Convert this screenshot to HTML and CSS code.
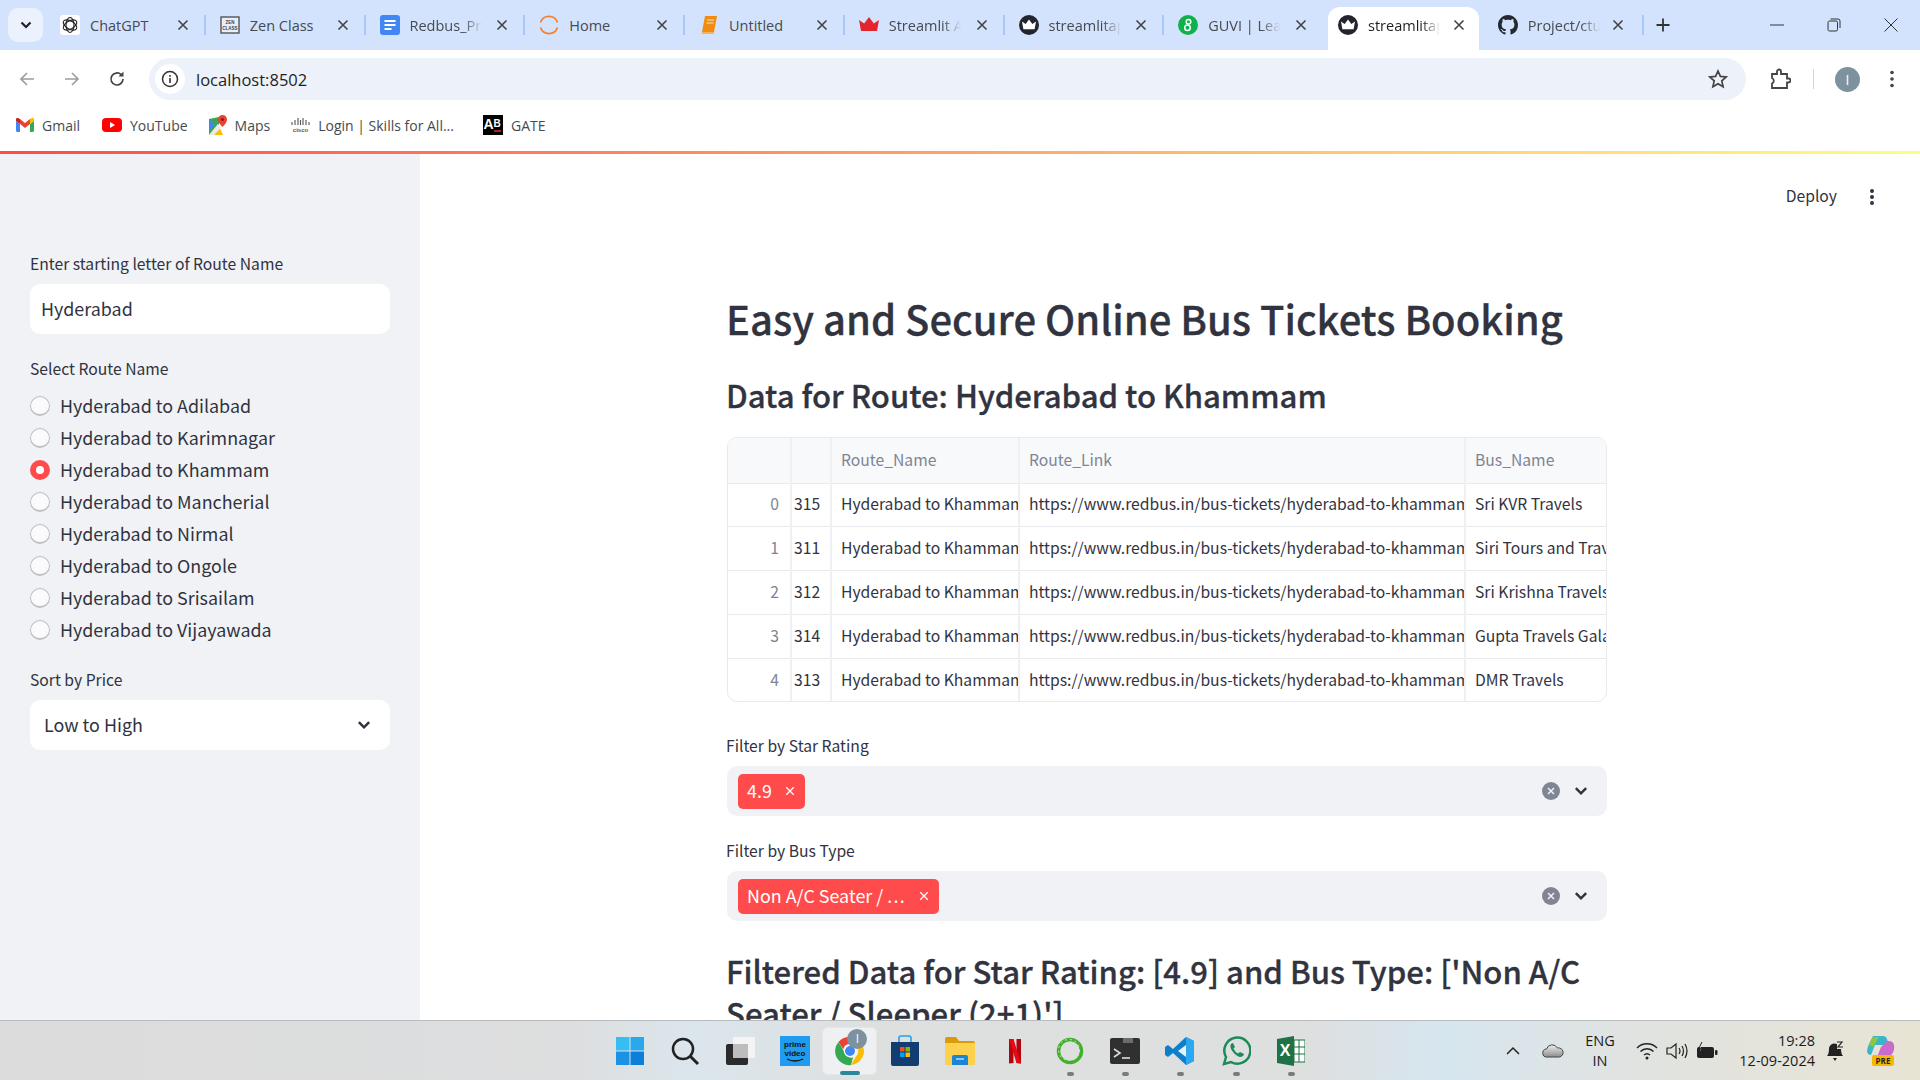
FILE: index.html
```html
<!DOCTYPE html>
<html>

<head>
    <meta name="viewport" content="width=device-width, initial-scale=1">
    <title>streamlitapp</title>
    <link rel="stylesheet" href="styles.css">
</head>

<body>

<svg class="defs" width="0" height="0">
    <symbol id="x" viewBox="0 0 12 12"><path d="M1.500 1.500l9 9M10.500 1.500l-9 9" fill="none" stroke="currentColor" stroke-width="1.600"/></symbol>
    <symbol id="crown" viewBox="0 0 20 20"><path d="M0 5l5.200 3.500L10 2l4.800 6.500L20 5l-2 11H2z" fill="currentColor"/></symbol>
    <symbol id="chev" viewBox="0 0 14 14"><path d="M2.500 4.500L7 9l4.500-4.500" fill="none" stroke="currentColor" stroke-width="2.200"/></symbol>
    <symbol id="clear" viewBox="0 0 18 18"><circle cx="9" cy="9" r="9" fill="#808495"/><path d="M6 6l6 6M12 6l-6 6" stroke="#f0f2f6" stroke-width="1.500"/></symbol>
</svg>

<!-- browser window -->
<header class="browser">
    <div class="tabstrip">
        <div class="tab-search"><svg width="14" height="14"><use href="#chev"/></svg></div>

        <div class="tab">
            <svg class="favicon" viewBox="0 0 20 20"><rect width="20" height="20" rx="3" fill="#fff"/><g fill="none" stroke="#222" stroke-width="1.100"><ellipse cx="10" cy="10" rx="4" ry="7.500"/><ellipse cx="10" cy="10" rx="4" ry="7.500" transform="rotate(60 10 10)"/><ellipse cx="10" cy="10" rx="4" ry="7.500" transform="rotate(120 10 10)"/></g></svg>
            <span class="tab-title">ChatGPT</span>
            <svg class="tab-x" width="12" height="12"><use href="#x"/></svg>
        </div>
        <div class="tab">
            <svg class="favicon" viewBox="0 0 20 20"><rect x="1" y="2" width="18" height="16" fill="#e9eef7" stroke="#555" stroke-width="1.400"/><text x="10" y="9" class="fav-text">ZEN</text><text x="10" y="15" class="fav-text">CLASS</text></svg>
            <span class="tab-title">Zen Class</span>
            <svg class="tab-x" width="12" height="12"><use href="#x"/></svg>
        </div>
        <div class="tab">
            <svg class="favicon" viewBox="0 0 20 20"><rect width="20" height="20" rx="3" fill="#4285f4"/><path d="M4.500 6h11M4.500 10h11M4.500 14h7" stroke="#fff" stroke-width="2"/></svg>
            <span class="tab-title fade">Redbus_Project</span>
            <svg class="tab-x" width="12" height="12"><use href="#x"/></svg>
        </div>
        <div class="tab">
            <svg class="favicon" viewBox="0 0 20 20"><path d="M1.500 7.500a9 9 0 0 1 17 0M1.500 12.500a9 9 0 0 0 17 0" fill="none" stroke="#f4812f" stroke-width="1.800"/></svg>
            <span class="tab-title">Home</span>
            <svg class="tab-x" width="12" height="12"><use href="#x"/></svg>
        </div>
        <div class="tab">
            <svg class="favicon" viewBox="0 0 20 20"><path d="M6 1h12l-3 16H3z" fill="#f08c12"/><path d="M3 17l-.6 2h12.200l.4-2z" fill="#f7b25c"/><path d="M8 5h7M7.500 8h7" stroke="#fde2bd" stroke-width="1.200"/></svg>
            <span class="tab-title">Untitled</span>
            <svg class="tab-x" width="12" height="12"><use href="#x"/></svg>
        </div>
        <div class="tab">
            <svg class="favicon crown-red" width="20" height="20"><use href="#crown"/></svg>
            <span class="tab-title fade">Streamlit App</span>
            <svg class="tab-x" width="12" height="12"><use href="#x"/></svg>
        </div>
        <div class="tab">
            <span class="favicon crown-dark"><svg width="14" height="14"><use href="#crown"/></svg></span>
            <span class="tab-title fade">streamlitapp</span>
            <svg class="tab-x" width="12" height="12"><use href="#x"/></svg>
        </div>
        <div class="tab last-before-active">
            <svg class="favicon" viewBox="0 0 20 20"><circle cx="10" cy="10" r="10" fill="#0fb14b"/><g fill="none" stroke="#fff" stroke-width="1.500"><circle cx="10.500" cy="6.800" r="2.300"/><circle cx="9.500" cy="12.800" r="2.800"/></g></svg>
            <span class="tab-title fade">GUVI | Learn</span>
            <svg class="tab-x" width="12" height="12"><use href="#x"/></svg>
        </div>
        <div class="tab active">
            <span class="favicon crown-dark"><svg width="14" height="14"><use href="#crown"/></svg></span>
            <span class="tab-title fade">streamlitapp</span>
            <svg class="tab-x" width="12" height="12"><use href="#x"/></svg>
        </div>
        <div class="tab">
            <svg class="favicon" viewBox="0 0 16 16"><path fill="#24292f" d="M8 0C3.580 0 0 3.580 0 8c0 3.540 2.290 6.530 5.470 7.590.4.070.55-.17.55-.38 0-.19-.01-.82-.01-1.490-2.010.37-2.530-.49-2.690-.94-.09-.23-.48-.94-.82-1.130-.28-.15-.68-.52-.01-.53.63-.01 1.080.58 1.230.82.72 1.210 1.870.87 2.330.66.070-.52.28-.87.51-1.070-1.780-.2-3.640-.89-3.640-3.950 0-.87.31-1.590.82-2.150-.08-.2-.36-1.020.08-2.120 0 0 .67-.21 2.200.82.64-.18 1.320-.27 2-.27.68 0 1.360.09 2 .27 1.530-1.040 2.200-.82 2.200-.82.44 1.100.16 1.920.08 2.120.51.56.82 1.270.82 2.150 0 3.070-1.870 3.750-3.650 3.950.29.25.54.73.54 1.480 0 1.070-.01 1.930-.01 2.200 0 .21.15.46.55.38A8.013 8.013 0 0016 8c0-4.420-3.580-8-8-8z"/></svg>
            <span class="tab-title fade">Project/ctu</span>
            <svg class="tab-x" width="12" height="12"><use href="#x"/></svg>
        </div>

        <svg class="new-tab" width="16" height="16" viewBox="0 0 16 16"><path d="M8 1.500v13M1.500 8h13" stroke="#333" stroke-width="1.800"/></svg>

        <div class="win-controls">
            <svg width="14" height="14" viewBox="0 0 14 14"><path d="M0 7h14" stroke="#333"/></svg>
            <svg width="14" height="14" viewBox="0 0 14 14"><rect x="1" y="3" width="9.500" height="10" rx="1.500" fill="none" stroke="#333"/><path d="M3.500 1h7.500q2 0 2 2v7" fill="none" stroke="#333"/></svg>
            <svg width="14" height="14" viewBox="0 0 14 14"><path d="M.5.500l13 13M13.500.500l-13 13" stroke="#333"/></svg>
        </div>
    </div>

    <div class="toolbar">
        <svg class="nav-btn" width="18" height="18" viewBox="0 0 18 18"><path d="M16 9H3M9 3L3 9l6 6" fill="none" stroke="#9b9ea3" stroke-width="1.700"/></svg>
        <svg class="nav-btn" width="18" height="18" viewBox="0 0 18 18"><path d="M2 9h13M9 3l6 6-6 6" fill="none" stroke="#9b9ea3" stroke-width="1.700"/></svg>
        <svg class="nav-btn" width="18" height="18" viewBox="0 0 18 18"><path d="M15 9a6 6 0 1 1-1.800-4.300" fill="none" stroke="#444" stroke-width="1.700"/><path d="M15.500 1.500v5h-5z" fill="#444"/></svg>

        <div class="omnibox">
            <span class="site-info">
                <svg width="18" height="18" viewBox="0 0 18 18"><circle cx="9" cy="9" r="7.500" fill="none" stroke="#333" stroke-width="1.500"/><path d="M9 8v5M9 5v1.800" stroke="#333" stroke-width="1.600"/></svg>
            </span>
            <span class="url">localhost:8502</span>
            <svg class="star" width="20" height="20" viewBox="0 0 20 20"><path d="M10 2l2.400 5.400 5.800.6-4.400 3.900 1.300 5.800L10 14.700l-5.100 3 1.300-5.800L1.800 8l5.800-.6z" fill="none" stroke="#444" stroke-width="1.700"/></svg>
        </div>

        <svg class="puzzle" width="22" height="22" viewBox="0 0 22 22"><path d="M3 6h5V3.500a2 2 0 0 1 4 0V6h6v4.500h1.500a2 2 0 0 1 0 4H18V20H3v-4.500a3 3 0 0 0 0-5.500z" fill="none" stroke="#444" stroke-width="1.800"/></svg>
        <span class="toolbar-sep"></span>
        <span class="avatar">I</span>
        <svg class="kebab" width="4" height="18" viewBox="0 0 4 18"><circle cx="2" cy="2.500" r="1.800" fill="#444"/><circle cx="2" cy="9" r="1.800" fill="#444"/><circle cx="2" cy="15.500" r="1.800" fill="#444"/></svg>
    </div>

    <div class="bookmarks">
        <span class="bookmark bm-gmail">
            <svg width="18" height="14" viewBox="0 0 18 14"><path d="M0 3v9.500A1.500 1.500 0 0 0 1.500 14H4V6z" fill="#4285f4"/><path d="M18 3v9.500a1.500 1.500 0 0 1-1.500 1.500H14V6z" fill="#34a853"/><path d="M4 6l5 4 5-4V1L9 5 4 1z" fill="#ea4335"/><path d="M0 3l4 3V1L2.500.2A1.600 1.600 0 0 0 0 1.500z" fill="#c5221f"/><path d="M18 3l-4 3V1l1.500-.8A1.600 1.600 0 0 1 18 1.500z" fill="#fbbc04"/></svg>
            Gmail
        </span>
        <span class="bookmark bm-youtube">
            <svg width="20" height="14" viewBox="0 0 20 14"><rect width="20" height="14" rx="4" fill="#f00"/><path d="M8 4l5 3-5 3z" fill="#fff"/></svg>
            YouTube
        </span>
        <span class="bookmark bm-maps">
            <svg width="18" height="20" viewBox="0 0 18 20"><path d="M0 4l10-2v18L0 20z" fill="#34a853"/><path d="M0 20L9 9l5 11z" fill="#fbbc04"/><path d="M9 9L0 20h5l7-7z" fill="#e8eaed"/><path d="M0 4l6 6-6 6z" fill="#4285f4"/><path d="M13.500 0A4.500 4.500 0 0 0 9 4.500C9 8 13.500 12 13.500 12S18 8 18 4.500A4.500 4.500 0 0 0 13.500 0z" fill="#ea4335"/><circle cx="13.500" cy="4.500" r="1.600" fill="#8c1d18"/></svg>
            Maps
        </span>
        <span class="bookmark bm-cisco">
            <svg width="19" height="18" viewBox="0 0 19 18"><path d="M1 6v3M4 4v5M7 2v7M9.500 4v5M12 2v7M15 4v5M18 6v3" stroke="#555" stroke-width="1.100"/><text x="9.500" y="16" class="fav-cisco">cisco</text></svg>
            Login | Skills for All...
        </span>
        <span class="bookmark bm-gate">
            <svg width="20" height="20" viewBox="0 0 20 20"><rect width="20" height="20" fill="#000"/><text x="5.500" y="14" class="fav-ab">A</text><text x="14" y="12" class="fav-ab small">B</text><path d="M11 16h7" stroke="#e33" stroke-width="1.400"/></svg>
            GATE
        </span>
    </div>
</header>

<!-- streamlit app -->
<div class="decoration"></div>

<div class="app">
    <aside class="sidebar">
        <label class="st-label">Enter starting letter of Route Name</label>
        <div class="text-input">Hyderabad</div>

        <label class="st-label radios-label">Select Route Name</label>
        <div class="radio-group">
            <div class="radio"><span class="dot"></span>Hyderabad to Adilabad</div>
            <div class="radio"><span class="dot"></span>Hyderabad to Karimnagar</div>
            <div class="radio checked"><span class="dot"></span>Hyderabad to Khammam</div>
            <div class="radio"><span class="dot"></span>Hyderabad to Mancherial</div>
            <div class="radio"><span class="dot"></span>Hyderabad to Nirmal</div>
            <div class="radio"><span class="dot"></span>Hyderabad to Ongole</div>
            <div class="radio"><span class="dot"></span>Hyderabad to Srisailam</div>
            <div class="radio"><span class="dot"></span>Hyderabad to Vijayawada</div>
        </div>

        <label class="st-label sort-label">Sort by Price</label>
        <div class="select-box">
            Low to High
            <svg width="16" height="16"><use href="#chev"/></svg>
        </div>
    </aside>

    <main class="main">
        <div class="app-header">
            <span class="deploy">Deploy</span>
            <svg class="st-kebab" width="4" height="18" viewBox="0 0 4 18"><circle cx="2" cy="3" r="2" fill="#31333f"/><circle cx="2" cy="9" r="2" fill="#31333f"/><circle cx="2" cy="15" r="2" fill="#31333f"/></svg>
        </div>

        <div class="block">
            <h1>Easy and Secure Online Bus Tickets Booking</h1>
            <h3 class="route-title">Data for Route: Hyderabad to Khammam</h3>

            <div class="table-wrap">
                <table class="df">
                    <colgroup>
                        <col class="c-index"><col class="c-id"><col class="c-name"><col class="c-link"><col class="c-bus">
                    </colgroup>
                    <thead>
                        <tr><th></th><th></th><th>Route_Name</th><th>Route_Link</th><th>Bus_Name</th></tr>
                    </thead>
                    <tbody>
                        <tr><td class="idx">0</td><td class="id">315</td><td>Hyderabad to Khammam</td><td>https://www.redbus.in/bus-tickets/hyderabad-to-khammam</td><td>Sri KVR Travels</td></tr>
                        <tr><td class="idx">1</td><td class="id">311</td><td>Hyderabad to Khammam</td><td>https://www.redbus.in/bus-tickets/hyderabad-to-khammam</td><td>Siri Tours and Travels</td></tr>
                        <tr><td class="idx">2</td><td class="id">312</td><td>Hyderabad to Khammam</td><td>https://www.redbus.in/bus-tickets/hyderabad-to-khammam</td><td>Sri Krishna Travels</td></tr>
                        <tr><td class="idx">3</td><td class="id">314</td><td>Hyderabad to Khammam</td><td>https://www.redbus.in/bus-tickets/hyderabad-to-khammam</td><td>Gupta Travels Galaxy</td></tr>
                        <tr><td class="idx">4</td><td class="id">313</td><td>Hyderabad to Khammam</td><td>https://www.redbus.in/bus-tickets/hyderabad-to-khammam</td><td>DMR Travels</td></tr>
                    </tbody>
                </table>
            </div>

            <label class="st-label filter-label first">Filter by Star Rating</label>
            <div class="multiselect">
                <span class="tag">4.9 <svg width="10" height="10"><use href="#x"/></svg></span>
                <svg class="ms-clear" width="18" height="18"><use href="#clear"/></svg>
                <svg class="ms-chev" width="16" height="16"><use href="#chev"/></svg>
            </div>

            <label class="st-label filter-label">Filter by Bus Type</label>
            <div class="multiselect">
                <span class="tag"><span>Non A/C Seater / <span class="dots">...</span></span> <svg width="10" height="10"><use href="#x"/></svg></span>
                <svg class="ms-clear" width="18" height="18"><use href="#clear"/></svg>
                <svg class="ms-chev" width="16" height="16"><use href="#chev"/></svg>
            </div>

            <h3 class="filtered-title">Filtered Data for Star Rating: [4.9] and Bus Type: ['Non A/C Seater / Sleeper (2+1)']</h3>
        </div>
    </main>
</div>

<!-- windows taskbar -->
<footer class="taskbar">
    <div class="task-apps">
        <span class="task-app"><svg width="30" height="30" viewBox="0 0 30 30"><path d="M1 1h13.500v13.500H1z" fill="#38bdf2"/><path d="M15.500 1H29v13.500H15.500z" fill="#2aa8ee"/><path d="M1 15.500h13.500V29H1z" fill="#1b92e4"/><path d="M15.500 15.500H29V29H15.500z" fill="#0c7fd8"/></svg></span>
        <span class="task-app"><svg width="30" height="30" viewBox="0 0 30 30"><circle cx="13" cy="13" r="10" fill="none" stroke="#222" stroke-width="2.500"/><path d="M20 20l8 8" stroke="#222" stroke-width="3"/></svg></span>
        <span class="task-app"><svg width="30" height="30" viewBox="0 0 30 30"><rect x="8" y="1" width="22" height="21" rx="1" fill="#f4f4f4"/><rect x="1" y="8" width="22" height="21" rx="2" fill="#2b2b2b"/><rect x="8" y="8" width="15" height="14" fill="#bdbdbd"/></svg></span>
        <span class="task-app"><svg width="30" height="30" viewBox="0 0 30 30"><rect width="30" height="30" fill="#1f9cf0"/><text x="15" y="11" class="prime-text">prime</text><text x="15" y="20" class="prime-text">video</text><path d="M7 23q8 4 16 0" fill="none" stroke="#111" stroke-width="1.300"/></svg></span>
        <span class="task-app active">
            <svg width="30" height="30" viewBox="0 0 30 30"><path d="M15 1a14 14 0 0 1 12.100 7H15a7 7 0 0 0-6.800 5.300L3.500 6A14 14 0 0 1 15 1z" fill="#ea4335"/><path d="M27.100 8A14 14 0 0 1 16 29l5-8.500A7 7 0 0 0 21 10z" fill="#fbbc04"/><path d="M3.500 6L10 17a7 7 0 0 0 8 4.500L16 29A14 14 0 0 1 3.500 6z" fill="#34a853"/><circle cx="15" cy="15" r="5.600" fill="#4285f4" stroke="#fff" stroke-width="1.200"/></svg>
            <span class="task-badge">I</span>
            <span class="task-bar"></span>
        </span>
        <span class="task-app"><svg width="30" height="32" viewBox="0 0 30 32"><path d="M9 7V3q0-2 2-2h8q2 0 2 2v4" fill="none" stroke="#2aa0e8" stroke-width="1.600"/><path d="M1 7h28v22q0 2-2 2H3q-2 0-2-2z" fill="#123d70"/><path d="M10 12h4.500v4.500H10z" fill="#f25022"/><path d="M15.500 12H20v4.500h-4.500z" fill="#7fba00"/><path d="M10 17.500h4.500V22H10z" fill="#00a4ef"/><path d="M15.500 17.500H20V22h-4.500z" fill="#ffb900"/></svg></span>
        <span class="task-app"><svg width="30" height="30" viewBox="0 0 30 30"><path d="M0 3q0-2 2-2h9l3 4h14q2 0 2 2v4H0z" fill="#d99a0c"/><path d="M0 7h30v21q0 1-1 1H1q-1 0-1-1z" fill="#fcd14d"/><path d="M7 21q0-2 2-2h12q2 0 2 2v8H7z" fill="#1a85d6"/><path d="M11 23h8" stroke="#bfe1fa" stroke-width="1.400"/></svg></span>
        <span class="task-app"><svg width="16" height="26" viewBox="0 0 16 26"><path d="M2 1h4.500v24L2 25.500z" fill="#b1060f"/><path d="M9.500 1H14v24.500L9.500 25z" fill="#b1060f"/><path d="M2 1h4.500l7.500 24.500-4.500-.5z" fill="#e50914"/></svg></span>
        <span class="task-app"><svg width="28" height="30" viewBox="0 0 28 30"><circle cx="14" cy="15" r="11.500" fill="none" stroke="#43b02a" stroke-width="3.500"/><circle cx="13" cy="14" r="10.500" fill="none" stroke="#cfe9c6" stroke-width="1" stroke-dasharray="2 3"/></svg></span>
        <span class="task-app"><svg width="30" height="26" viewBox="0 0 30 26"><rect width="30" height="26" rx="2" fill="#303030"/><path d="M13 0h10v5H13z" fill="#6b6b6b"/><path d="M4 11l6 4-6 4" fill="none" stroke="#ddd" stroke-width="1.600"/><path d="M12 20h8" stroke="#ddd" stroke-width="1.600"/></svg></span>
        <span class="task-app"><svg width="30" height="30" viewBox="0 0 30 30"><path d="M21 1l8 4v20l-8 4L8 17l-5 4-3-2V11l3-2 5 4z" fill="#0f7fcc"/><path d="M21 1l8 4v20l-8 4z" fill="#2aa8f0"/><path d="M21 9v12l-8-6z" fill="#e8f2fa"/></svg></span>
        <span class="task-app"><svg width="30" height="32" viewBox="0 0 30 32"><path d="M3 29l2-7a13 13 0 1 1 5 5z" fill="none" stroke="#1f8a57" stroke-width="2.500"/><path d="M10 9q-2 3 2 8t8 5q3-1 3-3l-4-2-2 1.500q-3-1.500-4.500-5L14 12l-2-4q-1 0-2 1z" fill="#1f8a57"/></svg></span>
        <span class="task-app"><svg width="28" height="30" viewBox="0 0 28 30"><rect x="9" y="4" width="19" height="22" fill="#fff" stroke="#1f7244"/><path d="M17 4v22M9 11h19M9 18h19M22 4v22" stroke="#1f7244"/><path d="M0 3l17-3v30L0 27z" fill="#1f7244"/><text x="8" y="20" class="xl-text">X</text></svg></span>
    </div>

    <div class="tray">
        <svg class="tray-chev" width="14" height="10" viewBox="0 0 14 10"><path d="M1 8l6-6 6 6" fill="none" stroke="#222" stroke-width="1.500"/></svg>
        <svg class="tray-cloud" width="22" height="14" viewBox="0 0 22 14"><defs><linearGradient id="cloud" x1="0" y1="0" x2="0" y2="1"><stop offset="0" stop-color="#eee"/><stop offset="1" stop-color="#8d8d8d"/></linearGradient></defs><path d="M5 13a4 4 0 0 1-.5-8 6 6 0 0 1 11-1 4.500 4.500 0 0 1 2 9z" fill="url(#cloud)" stroke="#444"/></svg>
        <span class="tray-lang">ENG<br>IN</span>
        <svg class="tray-wifi" width="22" height="18" viewBox="0 0 22 18"><g fill="none" stroke="#222" stroke-width="1.400"><path d="M1 6a14 14 0 0 1 20 0"/><path d="M4.500 9.500a9 9 0 0 1 13 0"/><path d="M8 13a4.500 4.500 0 0 1 6 0"/></g><circle cx="11" cy="16" r="1.500" fill="#222"/></svg>
        <svg class="tray-vol" width="22" height="18" viewBox="0 0 22 18"><path d="M1 6h4l5-4v14l-5-4H1z" fill="none" stroke="#222" stroke-width="1.200"/><path d="M13 6q2 3 0 6M16 4q3 5 0 10M19 2q4 7 0 14" fill="none" stroke="#222" stroke-width="1.200"/></svg>
        <svg class="tray-batt" width="22" height="18" viewBox="0 0 22 18"><rect x="1" y="5" width="17" height="11" rx="2" fill="#222"/><rect x="19" y="8" width="2.500" height="5" rx="1" fill="#222"/><path d="M6 0L3 6h3L4 11" fill="#eee" stroke="#222"/></svg>
        <span class="tray-clock">19:28<br>12-09-2024</span>
        <svg class="tray-bell" width="18" height="22" viewBox="0 0 18 22"><path d="M1 16q2-2 2-7a5.500 5.500 0 0 1 8-5v5h4q0 5 2 7z" fill="#222"/><path d="M7 18h4l-2 3z" fill="#222"/><path d="M11 2h5l-4 5h5" fill="none" stroke="#222" stroke-width="1.200"/></svg>
        <span class="copilot">
            <svg width="30" height="26" viewBox="0 0 30 26"><path d="M8 1h10q3 0 4 3l2 6H10L6 20q-3 0-4-3 0-4 2-8z" fill="#3bb5c8"/><path d="M22 6h2q4 0 5 4 1 5-2 9-2 3-6 3H12l4-10z" fill="#c86bc9"/><path d="M4 9l4-7h6L8 12z" fill="#8dc63f"/></svg>
            <span class="pre">PRE</span>
        </span>
    </div>
</footer>

</body>
</html>
```

FILE: styles.css
```css
* {
    box-sizing: border-box;
}

html, body {
    height: 100%;
}

body {
    margin: 0;
    height: 1080px;
    display: flex;
    flex-direction: column;
    overflow: hidden;
    font-family: "Noto Sans CJK SC", "Noto Sans", sans-serif;
    color: #31333f;
    background: #fff;
}

.defs {
    position: absolute;
}

/* browser chrome */
.browser {
    font-family: "Open Sans", "Noto Sans", sans-serif;
    flex: none;
    background: #fff;
}

.tabstrip {
    height: 50px;
    display: flex;
    align-items: center;
    padding-left: 8px;
    background: #d3e3fd;
}

.tab-search {
    width: 35px;
    height: 34px;
    margin-right: 3px;
    display: flex;
    align-items: center;
    justify-content: center;
    background: #ecf2fd;
    border-radius: 10px;
    color: #222;
}

.tab {
    width: 159.75px;
    height: 50px;
    flex: none;
    display: flex;
    align-items: center;
    padding: 0 17px 0 14px;
    position: relative;
    color: #474a4f;
    font-size: 14.5px;
}

.tab::after {
    content: "";
    position: absolute;
    right: 0;
    top: 15px;
    height: 20px;
    width: 2px;
    background: #a8c7fa;
}

.tab.last-before-active::after, .tab.active::after {
    display: none;
}

.tab.active {
    color: #1f1f1f;
    padding-right: 19px;
}

.tab.active + .tab {
    padding-right: 20px;
}

.tab.active::before {
    content: "";
    position: absolute;
    left: 4px;
    right: 5px;
    top: 7px;
    bottom: 0;
    background: #fff;
    border-radius: 12px 12px 0 0;
}

.tab > * {
    position: relative;
}

.favicon {
    width: 20px;
    height: 20px;
    flex: none;
}

.crown-red {
    color: #e5252d;
}

.crown-dark {
    display: flex;
    align-items: center;
    justify-content: center;
    border-radius: 50%;
    background: #23242d;
    color: #fff;
}

.fav-text {
    font: bold 4.500px "Liberation Sans", sans-serif;
    text-anchor: middle;
    fill: #444;
}

.tab-title {
    width: 76px;
    margin-left: 10px;
    white-space: nowrap;
    overflow: hidden;
}

.tab-title.fade {
    -webkit-mask-image: linear-gradient(to right, #000 70%, transparent 95%);
    mask-image: linear-gradient(to right, #000 70%, transparent 95%);
}

.tab-x {
    margin-left: auto;
    color: #444;
}

.new-tab {
    margin-left: 11px;
}

.win-controls {
    margin-left: auto;
    padding-right: 22px;
    display: flex;
    gap: 43px;
}

.toolbar {
    height: 58px;
    display: flex;
    align-items: center;
    padding: 0 16px 0 18px;
    background: #fff;
    border-radius: 10px 10px 0 0;
}

.nav-btn {
    margin-right: 27px;
    flex: none;
}

.omnibox {
    width: 1597px;
    height: 42px;
    margin-left: -4px;
    display: flex;
    align-items: center;
    padding: 0 18px 0 6px;
    background: #edf2fa;
    border-radius: 21px;
}

.site-info {
    width: 30px;
    height: 30px;
    display: flex;
    align-items: center;
    justify-content: center;
    background: #fff;
    border-radius: 50%;
}

.url {
    margin-left: 11px;
    font-size: 16.500px;
    color: #1f1f1f;
}

.star {
    margin-left: auto;
}

.puzzle {
    margin-left: 23px;
}

.toolbar-sep {
    width: 1px;
    height: 20px;
    margin-left: 22px;
    background: #c7d7f0;
}

.avatar {
    width: 25px;
    height: 25px;
    margin-left: 21px;
    border-radius: 50%;
    background: #7c939f;
    color: #fff;
    font-size: 14px;
    line-height: 25px;
    text-align: center;
}

.kebab {
    margin-left: 30px;
}

.bookmarks {
    height: 43px;
    padding-bottom: 9px;
    display: flex;
    align-items: center;
    font-size: 14px;
    color: #474a4f;
}

.bookmark {
    display: flex;
    align-items: center;
    gap: 8px;
    white-space: nowrap;
}

.bm-gmail {
    margin-left: 16px;
}

.bm-youtube {
    margin-left: 22px;
}

.bm-maps {
    margin-left: 21px;
}

.bm-cisco {
    margin-left: 21px;
}

.bm-gate {
    margin-left: 29px;
}

.fav-cisco {
    font: bold 6px "Liberation Sans", sans-serif;
    text-anchor: middle;
    fill: #555;
}

.fav-ab {
    font: bold 14px "Liberation Sans", sans-serif;
    text-anchor: middle;
    fill: #fff;
}

.fav-ab.small {
    font-size: 10px;
}

/* streamlit */
.decoration {
    height: 3px;
    flex: none;
    background: linear-gradient(90deg, #ff4b4b, #fffd80);
}

.app {
    flex: 1;
    min-height: 0;
    display: flex;
    overflow: hidden;
}

.sidebar {
    width: 420px;
    flex: none;
    padding: 99px 30px 0;
    background: #f0f2f6;
}

.st-label {
    display: block;
    height: 22px;
    font-size: 15.700px;
    line-height: 22px;
}

.text-input {
    height: 50px;
    margin-top: 9px;
    padding-left: 11px;
    background: #fff;
    border-radius: 10px;
    font-size: 17.900px;
    line-height: 48px;
}

.radios-label {
    margin-top: 24px;
}

.radio-group {
    margin-top: 10px;
}

.radio {
    height: 32px;
    padding-bottom: 2px;
    display: flex;
    align-items: center;
    font-size: 17.900px;
}

.dot {
    width: 20px;
    height: 20px;
    margin-top: 2px;
    margin-right: 10px;
    border-radius: 50%;
    background: #fafafc;
    border: 1px solid #bfc0c6;
    border-bottom-width: 2px;
}

.radio.checked .dot {
    border: 6px solid #ff4b4b;
    background: #fff;
}

.sort-label {
    margin-top: 23px;
}

.select-box {
    height: 50px;
    margin-top: 9px;
    padding: 0 18px 2px 14px;
    display: flex;
    align-items: center;
    justify-content: space-between;
    background: #fff;
    border-radius: 10px;
    font-size: 17.900px;
}

.select-box svg {
    margin-top: 2px;
}

.main {
    flex: 1;
    min-width: 0;
}

.app-header {
    height: 86px;
    padding-right: 46px;
    display: flex;
    align-items: center;
    justify-content: flex-end;
}

.deploy {
    font-size: 15.700px;
    padding-bottom: 3px;
}

.st-kebab {
    margin-left: 33px;
}

.block {
    width: 880px;
    margin-left: 307px;
}

h1 {
    height: 66px;
    margin: 45px 0 0 -1px;
    font-size: 40px;
    font-weight: 500;
    line-height: 66px;
    white-space: nowrap;
    -webkit-text-stroke: 0.3px #31333f;
}

h3 {
    margin: 0 0 0 -1px;
    font-size: 31.100px;
    font-weight: 500;
    line-height: 42px;
    -webkit-text-stroke: 0.3px #31333f;
}

.route-title {
    margin-top: 23px;
}

.table-wrap {
    margin-top: 21px;
    height: 265px;
    overflow: hidden;
    border: 1px solid #e9eaee;
    border-radius: 10px;
}

.df {
    width: 880px;
    table-layout: fixed;
    border-collapse: collapse;
    font-size: 15.700px;
}

.c-index {
    width: 63px;
}

.c-id {
    width: 40px;
}

.c-name {
    width: 188px;
}

.c-link {
    width: 446px;
}

.c-bus {
    width: 143px;
}

.df th, .df td {
    border-left: 2px solid #eff0f3;
    border-bottom: 1px solid #e9eaee;
    padding: 0 0 2px 9px;
    overflow: hidden;
    white-space: nowrap;
    text-align: left;
    font-weight: 400;
}

.df th:first-child, .df td:first-child {
    border-left: 0;
}

.df tr:last-child td {
    border-bottom: 0;
}

.df th {
    height: 45px;
    background: #f8f9fb;
    color: #808495;
}

.df td {
    height: 43.750px;
}

.df td.idx {
    padding: 0 11px 2px 0;
    text-align: right;
    color: #808495;
}

.df td.id {
    padding-left: 2px;
}

.filter-label {
    margin-top: 25px;
    margin-left: -1px;
    line-height: 20px;
}

.filter-label.first {
    margin-top: 34px;
}

.multiselect {
    height: 50px;
    margin-top: 8px;
    padding-left: 11px;
    display: flex;
    align-items: center;
    background: #f0f2f6;
    border-radius: 10px;
}

.tag {
    height: 35px;
    padding: 0 10px 2px 9px;
    display: flex;
    align-items: center;
    gap: 13px;
    background: #ff4b4b;
    border-radius: 5px;
    color: #fff;
    font-size: 17.900px;
}

.tag svg {
    margin-top: 2px;
}

.dots {
    letter-spacing: 1.300px;
}

.ms-clear {
    margin-left: auto;
}

.ms-chev {
    margin-left: 13px;
    margin-right: 18px;
}

.filtered-title {
    margin-top: 29px;
}

/* taskbar */
.taskbar {
    height: 60px;
    flex: none;
    display: flex;
    align-items: center;
    padding-left: 602px;
    border-top: 1px solid #b8bcbe;
    background: linear-gradient(90deg, #dcdcdc, #dddedf 30%, #dbe6ec 36%, #dedfdf 46%, #dedfdf 68%, #d6e6ef 75%, #e0e3e2 84%, #e8e4d4);
    font-family: "Open Sans", "Noto Sans", sans-serif;
    color: #1c1c1c;
    position: relative;
    z-index: 1;
}

.task-apps {
    display: flex;
}

.task-app {
    width: 55.100px;
    height: 48px;
    display: flex;
    align-items: center;
    justify-content: center;
    position: relative;
}

.task-app::after {
    content: "";
    position: absolute;
    left: 50%;
    bottom: -1px;
    width: 7px;
    height: 4px;
    margin-left: -3px;
    border-radius: 2px;
    background: #7b7b7b;
}

.task-app:nth-child(-n+8)::after {
    display: none;
}

.task-app.active {
    background: #eef0f2;
    border-radius: 6px;
    box-shadow: 0 0 0 1px #e4e6e8 inset;
}

.task-badge {
    position: absolute;
    left: 25px;
    top: 2px;
    width: 20px;
    height: 20px;
    border-radius: 50%;
    background: #7d919f;
    color: #fff;
    font-size: 12px;
    line-height: 20px;
    text-align: center;
}

.task-bar {
    position: absolute;
    left: 18px;
    bottom: 0;
    width: 20px;
    height: 4px;
    border-radius: 2px;
    background: #2b8798;
}

.tray {
    margin-left: auto;
    display: flex;
    align-items: center;
    font-size: 14.500px;
    line-height: 20px;
}

.tray-chev {
    margin-right: 22px;
}

.tray-cloud {
    margin-right: 16px;
}

.tray-lang {
    width: 40px;
    text-align: center;
}

.tray-wifi {
    margin-left: 16px;
}

.tray-vol {
    margin-left: 8px;
}

.tray-batt {
    margin-left: 8px;
}

.tray-clock {
    width: 90px;
    margin-left: 7px;
    text-align: right;
}

.tray-bell {
    margin-left: 11px;
}

.copilot {
    width: 30px;
    height: 32px;
    margin-left: 21px;
    margin-right: 25px;
    position: relative;
}

.pre {
    position: absolute;
    left: 7px;
    top: 20px;
    width: 22px;
    height: 11px;
    background: #f5b800;
    border-radius: 2px;
    color: #222;
    font-size: 8px;
    font-weight: 700;
    line-height: 11px;
    text-align: center;
}

.prime-text {
    font: bold 8px "Liberation Sans", sans-serif;
    text-anchor: middle;
    fill: #111;
}

.xl-text {
    font: bold 16px "Liberation Sans", sans-serif;
    text-anchor: middle;
    fill: #fff;
}
```
